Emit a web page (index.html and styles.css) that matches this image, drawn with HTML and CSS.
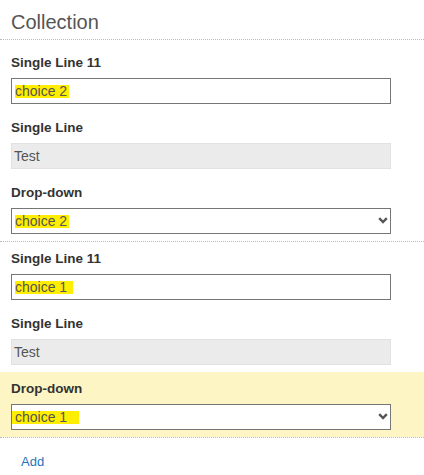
FILE: index.html
```html
<!DOCTYPE html>
<html>
<head>
<meta charset="utf-8">
<link rel="stylesheet" href="styles.css">
</head>
<body>
<div class="page">
  <h1 class="title">Collection</h1>

  <div class="section">
    <div class="row">
      <div class="label">Single Line 11</div>
      <div class="field"><span class="hl">choice 2</span></div>
    </div>
    <div class="row">
      <div class="label">Single Line</div>
      <div class="field field-disabled">Test</div>
    </div>
    <div class="row">
      <div class="label">Drop-down</div>
      <div class="field field-select">
        <span class="hl">choice 2</span>
        <svg class="chev" width="10" height="7" viewBox="0 0 10 7"><path d="M1.2 1.2 L5 5 L8.8 1.2" fill="none" stroke="#555" stroke-width="2.4"/></svg>
      </div>
    </div>
  </div>

  <div class="section">
    <div class="row">
      <div class="label">Single Line 11</div>
      <div class="field"><span class="hl hl-1">choice 1</span></div>
    </div>
    <div class="row">
      <div class="label">Single Line</div>
      <div class="field field-disabled">Test</div>
    </div>
    <div class="row row-active">
      <div class="label">Drop-down</div>
      <div class="field field-select">
        <span class="hl hl-wide">choice 1</span>
        <svg class="chev" width="10" height="7" viewBox="0 0 10 7"><path d="M1.2 1.2 L5 5 L8.8 1.2" fill="none" stroke="#555" stroke-width="2.4"/></svg>
      </div>
    </div>
  </div>

  <div class="actions"><a class="add" href="#">Add</a></div>
</div>
</body>
</html>
```

FILE: styles.css
```css
html, body {
  margin: 0;
  padding: 0;
  background: #fff;
}
body {
  font-family: "Liberation Sans", Arial, sans-serif;
  color: #333;
}
.page {
  width: 424px;
}
.title {
  margin: 0 0 6px 0;
  padding: 11px 11px 5px;
  font-size: 20px;
  line-height: 23px;
  font-weight: normal;
  color: #555;
  border-bottom: 1px dotted #bbb;
}
.section {
  border-bottom: 1px dotted #bbb;
}
.row {
  padding: 9px 11px 7px;
}
.row-active {
  background: #fdf6c4;
}
.label {
  font-size: 13.5px;
  line-height: 16px;
  font-weight: bold;
  color: #333;
  margin-bottom: 7px;
}
.field {
  box-sizing: border-box;
  width: 380px;
  height: 26px;
  border: 1px solid #767676;
  background: #fff;
  padding: 0 3px;
  font-size: 14px;
  line-height: 24px;
  color: #555;
  display: flex;
  align-items: center;
}
.field-disabled {
  background: #ebebeb;
  border-color: #e2e2e2;
  padding-left: 2px;
}
.field-select {
  position: relative;
}
.hl {
  display: inline-block;
  height: 13px;
  line-height: 13px;
  background: #ffee00;
  padding-right: 2px;
}
.hl-1 {
  padding-right: 6px;
}
.hl-wide {
  margin-left: -3px;
  padding-left: 3px;
  padding-right: 12px;
}
.chev {
  position: absolute;
  right: 2px;
  top: 8px;
}
.actions {
  padding: 14px 21px 0;
}
.add {
  font-size: 13px;
  line-height: 16px;
  color: #1e73be;
  text-decoration: none;
}
```
